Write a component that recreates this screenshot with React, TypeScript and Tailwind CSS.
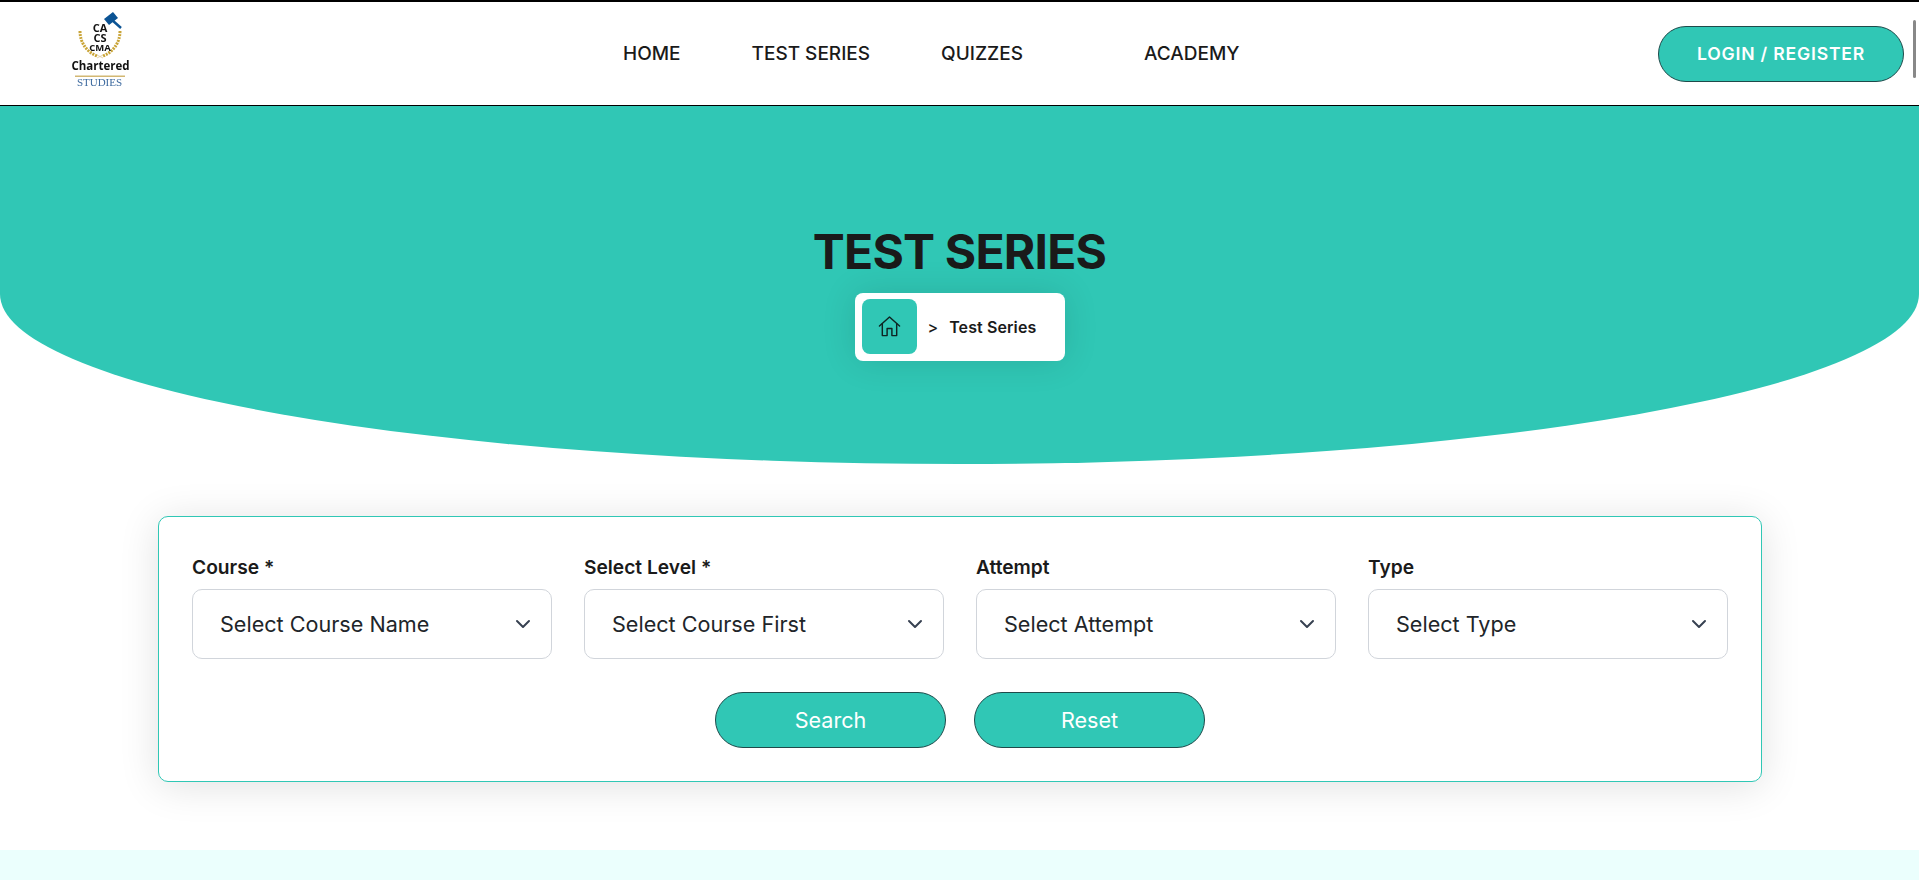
import { ChevronDown } from 'lucide-react';

const filters = [
  { label: 'Course *', placeholder: 'Select Course Name' },
  { label: 'Select Level *', placeholder: 'Select Course First' },
  { label: 'Attempt', placeholder: 'Select Attempt' },
  { label: 'Type', placeholder: 'Select Type' },
];

function Logo() {
  return (
    <svg viewBox="60 5 80 85" className="w-20 h-[85px] blur-[0.3px]">
      {/* gavel */}
      <path d="M104 18 L113 11 L118 17 L109 24 Z" fill="#0b5394" />
      <path d="M112 19 L121 27" stroke="#0b5394" strokeWidth="2.4" />
      {/* laurels */}
      <path d="M80 30 C80 42 87 51 97 55" stroke="#c9a437" strokeWidth="3" fill="none" strokeDasharray="2 1" />
      <path d="M120 30 C120 42 113 51 103 55" stroke="#c9a437" strokeWidth="3" fill="none" strokeDasharray="2 1" />
      <path d="M97 54 L103 57 M103 54 L97 57" stroke="#d9c48c" strokeWidth="0.7" />
      <g fontFamily="'Open Sans', sans-serif" fontWeight="700" textAnchor="middle" fill="#111">
        <text x="100" y="31" fontSize="11">CA</text>
        <text x="100" y="41" fontSize="11">CS</text>
        <text x="100" y="50" fontSize="9.5">CMA</text>
        <text x="100.5" y="69" fontSize="11.5">Chartered</text>
      </g>
      <rect x="75" y="74.5" width="50" height="1.5" fill="#d2b773" />
      <text x="99.5" y="85" fontSize="11" textAnchor="middle" fill="#3d6a9f" fontFamily="'Liberation Serif', serif">STUDIES</text>
    </svg>
  );
}

export default function App() {
  return (
    <div className="h-[880px] overflow-hidden flex flex-col bg-white text-[#1a1a1a] font-['Inter',sans-serif]">
      <header className="relative h-[106px] shrink-0 border-t-2 border-b border-black bg-white flex items-center">
        <div className="ml-[60px] -mt-[10px]">
          <Logo />
        </div>
        <nav className="ml-[483px] mt-[2px] flex items-center gap-[71px] text-[19px] font-medium whitespace-nowrap">
          <a>HOME</a>
          <a>TEST SERIES</a>
          <a>QUIZZES</a>
          <a className="ml-[50px]">ACADEMY</a>
        </nav>
        <button className="ml-auto mr-[15px] h-[56px] w-[246px] rounded-full border border-[#1f4a4a] bg-[#30c7b5] text-white text-[17.6px] font-semibold tracking-[0.8px] pt-[2px]">
          LOGIN / REGISTER
        </button>
        <div className="absolute right-[3px] top-[18px] h-[58px] w-[3px] bg-[#888888] rounded-sm" />
      </header>

      <section className="h-[358px] shrink-0 bg-[#30c7b5] rounded-b-[50%_170px] flex flex-col items-center pt-[117px]">
        <h1 className="text-[48px] leading-[58px] font-bold tracking-[-0.8px] text-[#1a1a1a]">TEST SERIES</h1>
        <div className="mt-[12px] w-[210px] h-[68px] bg-white rounded-lg pl-[7px] pt-[6px] flex items-start shadow-[0_0_35px_rgba(0,0,0,0.12)]">
          <div className="w-[55px] h-[55px] rounded-lg bg-[#30c7b5] flex items-center justify-center">
            <svg viewBox="0 0 24 24" className="w-[23px] h-[23px]" fill="none" stroke="#0e2523" strokeWidth="1.5" strokeLinecap="round" strokeLinejoin="round">
              <path d="M1.5 11.5 L12 2 L22.5 11.5" />
              <path d="M4.5 9 V21.5 H9.5 V14 H14.5 V21.5 H19.5 V9" />
            </svg>
          </div>
          <span className="ml-[11px] mt-[16px] text-[16px] font-medium">&gt;</span>
          <span className="ml-[11px] mt-[16px] text-[16px] font-semibold tracking-[0.1px]">Test Series</span>
        </div>
      </section>

      <main className="ml-[158px] mr-[157px] mt-[52px] shrink-0">
        <div className="border border-[#30c7b5] rounded-[10px] bg-white px-[33px] pt-[37px] pb-[33px] shadow-[0_4px_40px_rgba(0,0,0,0.12)]">
          <div className="grid grid-cols-4 gap-x-[32px]">
            {filters.map((f) => (
              <div key={f.label}>
                <label className="block mb-[8px] text-[19.2px] leading-[27px] font-semibold">{f.label}</label>
                <div className="h-[70px] border border-[#d1d5db] rounded-[10px] pl-[27px] pr-[16px] flex items-center justify-between text-[21.6px] text-[#212529]">
                  <span>{f.placeholder}</span>
                  <ChevronDown className="w-[24px] h-[24px] text-[#374151]" strokeWidth={2} />
                </div>
              </div>
            ))}
          </div>
          <div className="mt-[33px] flex justify-center gap-[28px]">
            <button className="w-[231px] h-[56px] rounded-full border border-[#1f4a4a] bg-[#30c7b5] text-white text-[21.6px]">Search</button>
            <button className="w-[231px] h-[56px] rounded-full border border-[#1f4a4a] bg-[#30c7b5] text-white text-[21.6px]">Reset</button>
          </div>
        </div>
      </main>

      <div className="mt-[68px] flex-1 bg-[#ebfffd]" />
    </div>
  );
}
